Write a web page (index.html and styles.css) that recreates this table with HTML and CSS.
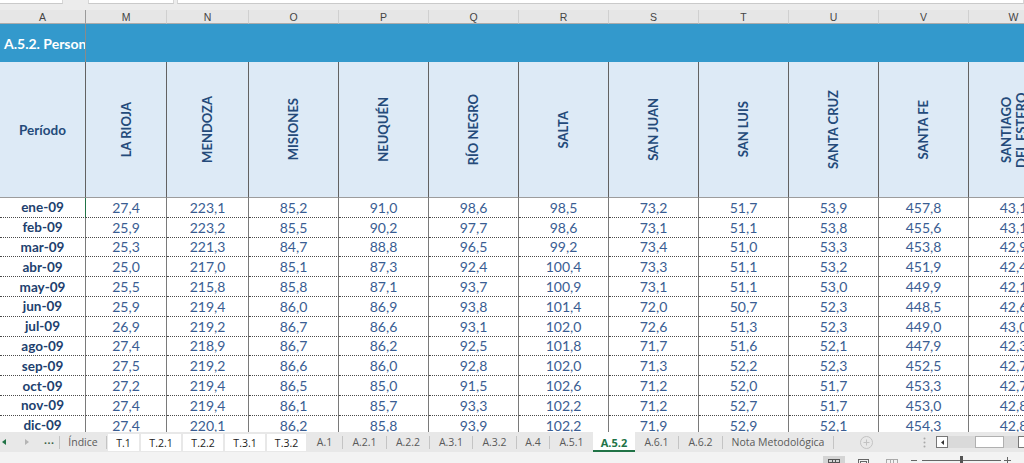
FILE: index.html
```html
<!DOCTYPE html>
<html lang="es">
<head>
<meta charset="utf-8">
<title>A.5.2</title>
<link rel="stylesheet" href="styles.css">
</head>
<body>
<div class="app">
  <div class="topstrip">
    <span class="tbox b1"></span>
    <span class="tbox b2"></span>
    <span class="tbox b3"></span>
  </div>

  <div class="sheet">
    <div class="grid">
      <div class="ch a">A</div><div class="ch">M</div><div class="ch">N</div><div class="ch">O</div><div class="ch">P</div><div class="ch">Q</div><div class="ch">R</div><div class="ch">S</div><div class="ch">T</div><div class="ch">U</div><div class="ch">V</div><div class="ch">W</div>

      <div class="title">A.5.2. Person</div><div class="titlefill"></div>

      <div class="hd a">Período</div>
      <div class="hd"><span class="vt">LA RIOJA</span></div>
      <div class="hd"><span class="vt">MENDOZA</span></div>
      <div class="hd"><span class="vt">MISIONES</span></div>
      <div class="hd"><span class="vt">NEUQUÉN</span></div>
      <div class="hd"><span class="vt">RÍO NEGRO</span></div>
      <div class="hd"><span class="vt">SALTA</span></div>
      <div class="hd"><span class="vt">SAN JUAN</span></div>
      <div class="hd"><span class="vt">SAN LUIS</span></div>
      <div class="hd"><span class="vt">SANTA CRUZ</span></div>
      <div class="hd"><span class="vt">SANTA FE</span></div>
      <div class="hd"><span class="vt wrap">SANTIAGO DEL ESTERO</span></div>

      <div class="c p sel">ene-09</div><div class="c">27,4</div><div class="c">223,1</div><div class="c">85,2</div><div class="c">91,0</div><div class="c">98,6</div><div class="c">98,5</div><div class="c">73,2</div><div class="c">51,7</div><div class="c">53,9</div><div class="c">457,8</div><div class="c">43,1</div>
      <div class="c p">feb-09</div><div class="c">25,9</div><div class="c">223,2</div><div class="c">85,5</div><div class="c">90,2</div><div class="c">97,7</div><div class="c">98,6</div><div class="c">73,1</div><div class="c">51,1</div><div class="c">53,8</div><div class="c">455,6</div><div class="c">43,1</div>
      <div class="c p">mar-09</div><div class="c">25,3</div><div class="c">221,3</div><div class="c">84,7</div><div class="c">88,8</div><div class="c">96,5</div><div class="c">99,2</div><div class="c">73,4</div><div class="c">51,0</div><div class="c">53,3</div><div class="c">453,8</div><div class="c">42,9</div>
      <div class="c p">abr-09</div><div class="c">25,0</div><div class="c">217,0</div><div class="c">85,1</div><div class="c">87,3</div><div class="c">92,4</div><div class="c">100,4</div><div class="c">73,3</div><div class="c">51,1</div><div class="c">53,2</div><div class="c">451,9</div><div class="c">42,4</div>
      <div class="c p">may-09</div><div class="c">25,5</div><div class="c">215,8</div><div class="c">85,8</div><div class="c">87,1</div><div class="c">93,7</div><div class="c">100,9</div><div class="c">73,1</div><div class="c">51,1</div><div class="c">53,0</div><div class="c">449,9</div><div class="c">42,1</div>
      <div class="c p">jun-09</div><div class="c">25,9</div><div class="c">219,4</div><div class="c">86,0</div><div class="c">86,9</div><div class="c">93,8</div><div class="c">101,4</div><div class="c">72,0</div><div class="c">50,7</div><div class="c">52,3</div><div class="c">448,5</div><div class="c">42,6</div>
      <div class="c p">jul-09</div><div class="c">26,9</div><div class="c">219,2</div><div class="c">86,7</div><div class="c">86,6</div><div class="c">93,1</div><div class="c">102,0</div><div class="c">72,6</div><div class="c">51,3</div><div class="c">52,3</div><div class="c">449,0</div><div class="c">43,0</div>
      <div class="c p">ago-09</div><div class="c">27,4</div><div class="c">218,9</div><div class="c">86,7</div><div class="c">86,2</div><div class="c">92,5</div><div class="c">101,8</div><div class="c">71,7</div><div class="c">51,6</div><div class="c">52,1</div><div class="c">447,9</div><div class="c">42,3</div>
      <div class="c p">sep-09</div><div class="c">27,5</div><div class="c">219,2</div><div class="c">86,6</div><div class="c">86,0</div><div class="c">92,8</div><div class="c">102,0</div><div class="c">71,3</div><div class="c">52,2</div><div class="c">52,3</div><div class="c">452,5</div><div class="c">42,7</div>
      <div class="c p">oct-09</div><div class="c">27,2</div><div class="c">219,4</div><div class="c">86,5</div><div class="c">85,0</div><div class="c">91,5</div><div class="c">102,6</div><div class="c">71,2</div><div class="c">52,0</div><div class="c">51,7</div><div class="c">453,3</div><div class="c">42,7</div>
      <div class="c p">nov-09</div><div class="c">27,4</div><div class="c">219,4</div><div class="c">86,1</div><div class="c">85,7</div><div class="c">93,3</div><div class="c">102,2</div><div class="c">71,2</div><div class="c">52,7</div><div class="c">51,7</div><div class="c">453,0</div><div class="c">42,8</div>
      <div class="c p">dic-09</div><div class="c">27,4</div><div class="c">220,1</div><div class="c">86,2</div><div class="c">85,8</div><div class="c">93,9</div><div class="c">102,2</div><div class="c">71,9</div><div class="c">52,9</div><div class="c">52,1</div><div class="c">454,3</div><div class="c">42,8</div>
    </div>
  </div>

  <div class="tabbar">
    <div class="nav">
      <svg class="nl" width="4" height="6" viewBox="0 0 4 6"><path d="M4 0V6L0 3Z" fill="#217346"/></svg>
      <svg class="nr" width="4" height="6" viewBox="0 0 4 6"><path d="M0 0V6L4 3Z" fill="#b4b4b4"/></svg>
      <span class="dots">...</span>
    </div>
    <i class="sep"></i>
    <div class="tab w46">Índice</div>
    <i class="sep"></i>
    <div class="tab wt first w31">T.1</div>
    <div class="tab wt w40">T.2.1</div>
    <div class="tab wt w40">T.2.2</div>
    <div class="tab wt w40">T.3.1</div>
    <div class="tab wt last w39">T.3.2</div>
    <div class="tab w35">A.1</div><i class="sep"></i>
    <div class="tab w43">A.2.1</div><i class="sep"></i>
    <div class="tab w42">A.2.2</div><i class="sep"></i>
    <div class="tab w42">A.3.1</div><i class="sep"></i>
    <div class="tab w43">A.3.2</div><i class="sep"></i>
    <div class="tab w32">A.4</div><i class="sep"></i>
    <div class="tab w43">A.5.1</div>
    <div class="tab on w42">A.5.2</div>
    <div class="tab w43">A.6.1</div><i class="sep"></i>
    <div class="tab w43">A.6.2</div><i class="sep"></i>
    <div class="tab w110">Nota Metodológica</div><i class="sep"></i>
    <div class="add">
      <svg width="13" height="13" viewBox="0 0 13 13"><circle cx="6.5" cy="6.5" r="6" fill="none" stroke="#c2c2c2"/><path d="M6.5 3.5V9.5M3.5 6.5H9.5" stroke="#c2c2c2"/></svg>
    </div>
    <div class="vdots">
      <svg width="3" height="11" viewBox="0 0 3 11"><circle cx="1.5" cy="1.5" r="1" fill="#a8a8a8"/><circle cx="1.5" cy="5.5" r="1" fill="#a8a8a8"/><circle cx="1.5" cy="9.5" r="1" fill="#a8a8a8"/></svg>
    </div>
    <div class="hscroll">
      <div class="abox"><svg width="3" height="5" viewBox="0 0 3 5"><path d="M3 0V5L0 2.5Z" fill="#333"/></svg></div>
      <div class="track"><div class="thumb"></div></div>
      <div class="abox"></div>
    </div>
  </div>

  <div class="status">
    <div class="sbtn on">
      <svg width="12" height="10" viewBox="0 0 12 10"><rect x=".5" y=".5" width="11" height="9" fill="none" stroke="#555"/><path d="M0 3.5H12M0 6.5H12M4.5 0V10M7.5 0V10" stroke="#555"/></svg>
    </div>
    <div class="sbtn">
      <svg width="11" height="10" viewBox="0 0 11 10"><rect x=".5" y=".5" width="10" height="9" fill="none" stroke="#666"/><rect x="2.5" y="2.5" width="6" height="6" fill="none" stroke="#666"/></svg>
    </div>
    <div class="sbtn">
      <svg width="12" height="10" viewBox="0 0 12 10"><rect x=".5" y=".5" width="11" height="9" fill="none" stroke="#aaa"/><path d="M4.5 0V10M7.5 0V10" stroke="#aaa"/></svg>
    </div>
    <div class="zminus"></div>
    <div class="slider"><div class="knob"></div></div>
    <div class="zplus"><svg width="7" height="7" viewBox="0 0 7 7"><path d="M3.5 0V7M0 3.5H7" stroke="#666"/></svg></div>
  </div>
</div>
</body>
</html>
```

FILE: styles.css
```css
* { box-sizing: border-box; margin: 0; padding: 0; }

html, body {
  width: 1024px;
  height: 463px;
  overflow: hidden;
}

body {
  font-family: Lato, "Liberation Sans", sans-serif;
  background: #ffffff;
}

.app {
  display: flex;
  flex-direction: column;
  height: 463px;
}

/* formula-bar remnant */
.topstrip {
  height: 10px;
  flex: none;
  background: #ececec;
  display: flex;
  align-items: flex-start;
}
.tbox {
  display: block;
  height: 4px;
  background: #ffffff;
  border-bottom: 1px solid #cacaca;
  border-right: 1px solid #d6d6d6;
}
.b1 { width: 63px; margin-right: 25px; }
.b2 { width: 86px; margin-right: 3px; border-left: 1px solid #d6d6d6; }
.b3 { flex: 1; border-left: 1px solid #d6d6d6; }

/* sheet */
.sheet {
  flex: 1;
  overflow: hidden;
}
.grid {
  display: grid;
  width: 1059px;
  grid-template-columns: 86px 81px 82px repeat(9, 90px);
  grid-template-rows: 14px 38px 136px;
  grid-auto-rows: 19.8px;
}

.ch {
  background: #e6e6e6;
  border-bottom: 1px solid #ababab;
  border-right: 1px solid #d0d0d0;
  font-family: "Liberation Sans", sans-serif;
  font-size: 10.5px;
  color: #444444;
  display: flex;
  align-items: center;
  justify-content: center;
  padding-top: 1px;
}
.ch.a { border-right-color: #9a9a9a; }

.title {
  background: #3399cc;
  color: #ffffff;
  font-weight: 700;
  font-size: 14px;
  display: flex;
  align-items: center;
  padding-left: 4px;
  white-space: nowrap;
  overflow: hidden;
  border-right: 1px solid #8a8a8a;
}
.titlefill {
  grid-column: span 11;
  background: #3399cc;
}

.hd {
  background: #ddeaf6;
  border-right: 1px solid #626262;
  border-bottom: 1px solid #9c9c9c;
  display: flex;
  align-items: center;
  justify-content: center;
  color: #244a7a;
  font-weight: 700;
  font-size: 13.5px;
}
.vt {
  writing-mode: vertical-rl;
  transform: rotate(180deg);
  font-size: 13px;
  line-height: 15px;
  white-space: nowrap;
}
.vt.wrap {
  white-space: normal;
  inline-size: 90px;
  text-align: center;
}

.c {
  border-right: 1px solid #7a7a7a;
  border-bottom: 1px dotted #4a4a4a;
  display: flex;
  align-items: center;
  justify-content: center;
  font-size: 14px;
  color: #3a5d92;
  white-space: nowrap;
}
.c.p {
  font-weight: 700;
  font-size: 13.5px;
  color: #213f6e;
}
.c.sel { border-right-color: #217346; }

/* sheet tabs */
.tabbar {
  height: 20px;
  flex: none;
  background: #e8e8e8;
  display: flex;
  align-items: stretch;
  font-family: "Open Sans", "Noto Sans", sans-serif;
  font-size: 10.5px;
  color: #5a5a5a;
}
.nav {
  width: 59px;
  flex: none;
  display: flex;
  align-items: center;
}
.nl { margin-left: 2px; }
.nr { margin-left: 19px; }
.dots {
  margin-left: 15px;
  font-weight: 700;
  color: #345c40;
  letter-spacing: 0.5px;
  line-height: 1;
  padding-bottom: 3px;
}
.sep {
  display: block;
  width: 1px;
  height: 13px;
  align-self: center;
  background: #c4c4c4;
  flex: none;
}
.tab {
  flex: none;
  display: flex;
  align-items: center;
  justify-content: center;
  white-space: nowrap;
}
.tab.wt {
  background: #ffffff;
  color: #222222;
  margin: 2px 2px 1px 0;
}
.tab.wt.first { margin-left: 1px; }
.tab.wt.last { margin-right: 1px; }
.tab.on {
  background: #ffffff;
  color: #217346;
  font-weight: 700;
  font-size: 11px;
  border-bottom: 2px solid #217346;
  padding-top: 2px;
}
.w31 { width: 31px; }
.w32 { width: 32px; }
.w35 { width: 35px; }
.w39 { width: 39px; }
.w40 { width: 40px; }
.w42 { width: 42px; }
.w43 { width: 43px; }
.w46 { width: 46px; }
.w110 { width: 110px; }

.add {
  width: 64px;
  flex: none;
  display: flex;
  align-items: center;
  justify-content: center;
}
.vdots {
  width: 20px;
  margin-left: 16px;
  flex: none;
  display: flex;
  align-items: center;
  justify-content: center;
}
.hscroll {
  margin-left: 2px;
  flex: 1;
  display: flex;
  align-items: center;
}
.abox {
  width: 12px;
  height: 12px;
  flex: none;
  background: #ffffff;
  border: 1px solid #777777;
  display: flex;
  align-items: center;
  justify-content: center;
}
.track {
  width: 70px;
  height: 12px;
  flex: none;
  background: #dadada;
  display: flex;
  align-items: stretch;
}
.thumb {
  margin-left: 27px;
  width: 29px;
  background: #ffffff;
  border: 1px solid #b0b0b0;
}

/* status bar */
.status {
  height: 11px;
  flex: none;
  background: #f3f3f3;
  overflow: hidden;
  display: flex;
  align-items: flex-start;
  padding-left: 823px;
}
.sbtn {
  width: 22px;
  height: 16px;
  margin-top: 4px;
  margin-right: 7px;
  flex: none;
  display: flex;
  justify-content: center;
  padding-top: 3px;
}
.sbtn.on { background: #d4d4d4; }
.zminus {
  width: 6px;
  height: 1px;
  margin-top: 8px;
  margin-left: 1px;
  background: #666666;
  flex: none;
}
.slider {
  width: 79px;
  height: 1px;
  margin-top: 8px;
  margin-left: 5px;
  background: #666666;
  flex: none;
  display: flex;
  justify-content: center;
}
.knob {
  width: 3px;
  height: 8px;
  margin-top: -4px;
  background: #555555;
}
.zplus {
  margin-left: 3px;
  margin-top: 5px;
  flex: none;
  display: flex;
}
```
